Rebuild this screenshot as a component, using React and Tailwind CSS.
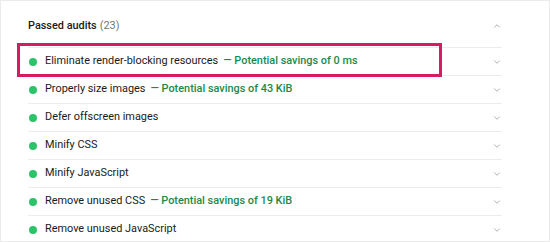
import { ChevronDown, ChevronUp } from 'lucide-react';

const audits = [
  { title: 'Eliminate render-blocking resources', savings: 'Potential savings of 0 ms' },
  { title: 'Properly size images', savings: 'Potential savings of 43 KiB' },
  { title: 'Defer offscreen images' },
  { title: 'Minify CSS' },
  { title: 'Minify JavaScript' },
  { title: 'Remove unused CSS', savings: 'Potential savings of 19 KiB' },
  { title: 'Remove unused JavaScript' },
];

function AuditRow({ title, savings }) {
  return (
    <div className="h-[28px] shrink-0 flex items-center border-t border-[#ececec]">
      <span className="w-[8px] h-[8px] rounded-full bg-[#2ec26a] ml-[1px] mr-[8px] shrink-0" />
      <span className="text-[#1a1a1a]">{title}</span>
      {savings && (
        <span className="ml-[5px] text-[#188a4c] font-medium">— {savings}</span>
      )}
      <ChevronDown size={10} strokeWidth={1.6} className="ml-auto text-[#8a8a8a]" />
    </div>
  );
}

export default function App() {
  return (
    <div className="relative w-[550px] h-[242px] bg-white border border-[#ebebeb] overflow-hidden font-['Roboto',sans-serif] text-[10.9px]">
      <div className="ml-[27px] w-[474px] flex flex-col">
        <div className="h-[46px] shrink-0 flex items-center pt-[4px]">
          <span className="font-medium text-[#1a1a1a]">Passed audits</span>
          <span className="ml-[3px] text-[#757575]">(23)</span>
          <ChevronUp size={10} strokeWidth={1.6} className="ml-auto text-[#8a8a8a]" />
        </div>
        {audits.map(a => (
          <AuditRow key={a.title} {...a} />
        ))}
      </div>

      {/* highlight box */}
      <div className="absolute left-[16px] top-[42px] w-[425px] h-[34px] border-[3px] border-[#d81b60]" />
    </div>
  );
}
